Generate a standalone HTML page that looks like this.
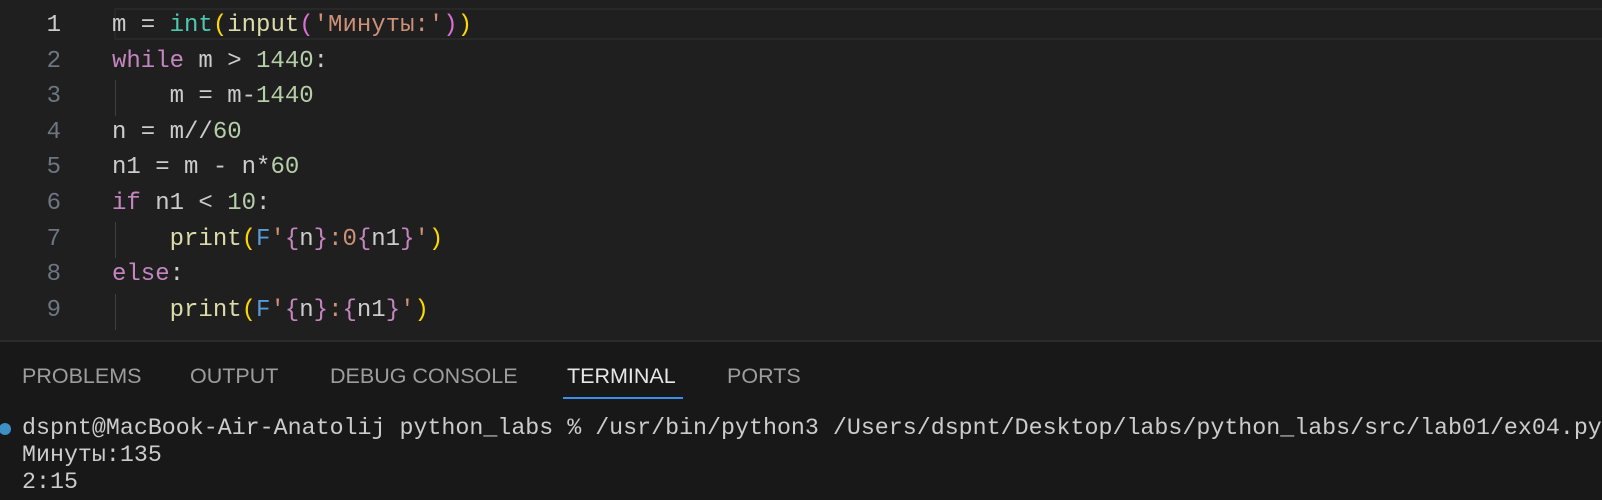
<!DOCTYPE html>
<html><head><meta charset="utf-8"><style>
body{margin:0;width:1602px;height:498px;overflow:hidden;background:#1f1f1f;font-family:"Liberation Mono","DejaVu Sans Mono",monospace;}
.ed{position:absolute;left:0;top:0;width:1602px;height:340px;background:#1f1f1f;}
.cur{position:absolute;left:114px;top:8px;right:0;height:32px;border:2px solid #282828;border-right:none;box-sizing:border-box;}
.ln{position:absolute;left:0;width:61px;text-align:right;color:#6e7681;font-size:24px;height:35.6px;line-height:35.6px;}
.cd{position:absolute;left:112px;font-size:24px;height:35.6px;line-height:35.6px;color:#cccccc;white-space:pre;}
.g{position:absolute;left:115px;width:1px;background:#404040;}
.k{color:#c586c0}.t{color:#4ec9b0}.f{color:#dcdcaa}.s{color:#ce9178}.n{color:#b5cea8}.y{color:#ffd700}.p{color:#da70d6}.b{color:#569cd6}.v{color:#9cdcfe}
.panel{position:absolute;left:0;top:340px;width:1602px;height:158px;background:#181818;border-top:2px solid #2b2b2b;}
.tab{position:absolute;top:22px;font-family:"Liberation Sans",sans-serif;font-size:21.5px;color:#9d9d9d;}
.term{position:absolute;left:22px;font-size:23.3px;color:#cccccc;white-space:pre;line-height:27px;}
</style></head><body>
<div class="ed">
<div class="cur"></div>
<div class="ln" style="top:8px;color:#cccccc">1</div>
<div class="ln" style="top:43.6px">2</div>
<div class="ln" style="top:79.2px">3</div>
<div class="ln" style="top:114.8px">4</div>
<div class="ln" style="top:150.4px">5</div>
<div class="ln" style="top:186px">6</div>
<div class="ln" style="top:221.6px">7</div>
<div class="ln" style="top:257.2px">8</div>
<div class="ln" style="top:292.8px">9</div>
<div class="g" style="top:80px;height:36px"></div>
<div class="g" style="top:222px;height:36px"></div>
<div class="g" style="top:294px;height:36px"></div>
<div class="cd" style="top:8px">m = <span class="t">int</span><span class="y">(</span><span class="f">input</span><span class="p">(</span><span class="s">'Минуты:'</span><span class="p">)</span><span class="y">)</span></div>
<div class="cd" style="top:43.6px"><span class="k">while</span> m &gt; <span class="n">1440</span>:</div>
<div class="cd" style="top:79.2px">    m = m-<span class="n">1440</span></div>
<div class="cd" style="top:114.8px">n = m//<span class="n">60</span></div>
<div class="cd" style="top:150.4px">n1 = m - n*<span class="n">60</span></div>
<div class="cd" style="top:186px"><span class="k">if</span> n1 &lt; <span class="n">10</span>:</div>
<div class="cd" style="top:221.6px">    <span class="f">print</span><span class="y">(</span><span class="b">F</span><span class="s">'</span><span class="k">{</span>n<span class="k">}</span><span class="s">:0</span><span class="k">{</span>n1<span class="k">}</span><span class="s">'</span><span class="y">)</span></div>
<div class="cd" style="top:257.2px"><span class="k">else</span>:</div>
<div class="cd" style="top:292.8px">    <span class="f">print</span><span class="y">(</span><span class="b">F</span><span class="s">'</span><span class="k">{</span>n<span class="k">}</span><span class="s">:</span><span class="k">{</span>n1<span class="k">}</span><span class="s">'</span><span class="y">)</span></div>
</div>
<div class="panel">
<div class="tab" style="left:22px">PROBLEMS</div>
<div class="tab" style="left:190px">OUTPUT</div>
<div class="tab" style="left:330px">DEBUG CONSOLE</div>
<div class="tab" style="left:567px;color:#e7e7e7">TERMINAL</div>
<div class="tab" style="left:727px">PORTS</div>
<div style="position:absolute;left:563px;top:55px;width:120px;height:2px;background:#3b8eea"></div>
<div style="position:absolute;left:-1px;top:81px;width:12px;height:12px;border-radius:50%;background:#3d8fc4"></div>
<div class="term" style="top:73px">dspnt@MacBook-Air-Anatolij python_labs % /usr/bin/python3 /Users/dspnt/Desktop/labs/python_labs/src/lab01/ex04.py</div>
<div class="term" style="top:100px">Минуты:135</div>
<div class="term" style="top:127px">2:15</div>
</div>
</body></html>
